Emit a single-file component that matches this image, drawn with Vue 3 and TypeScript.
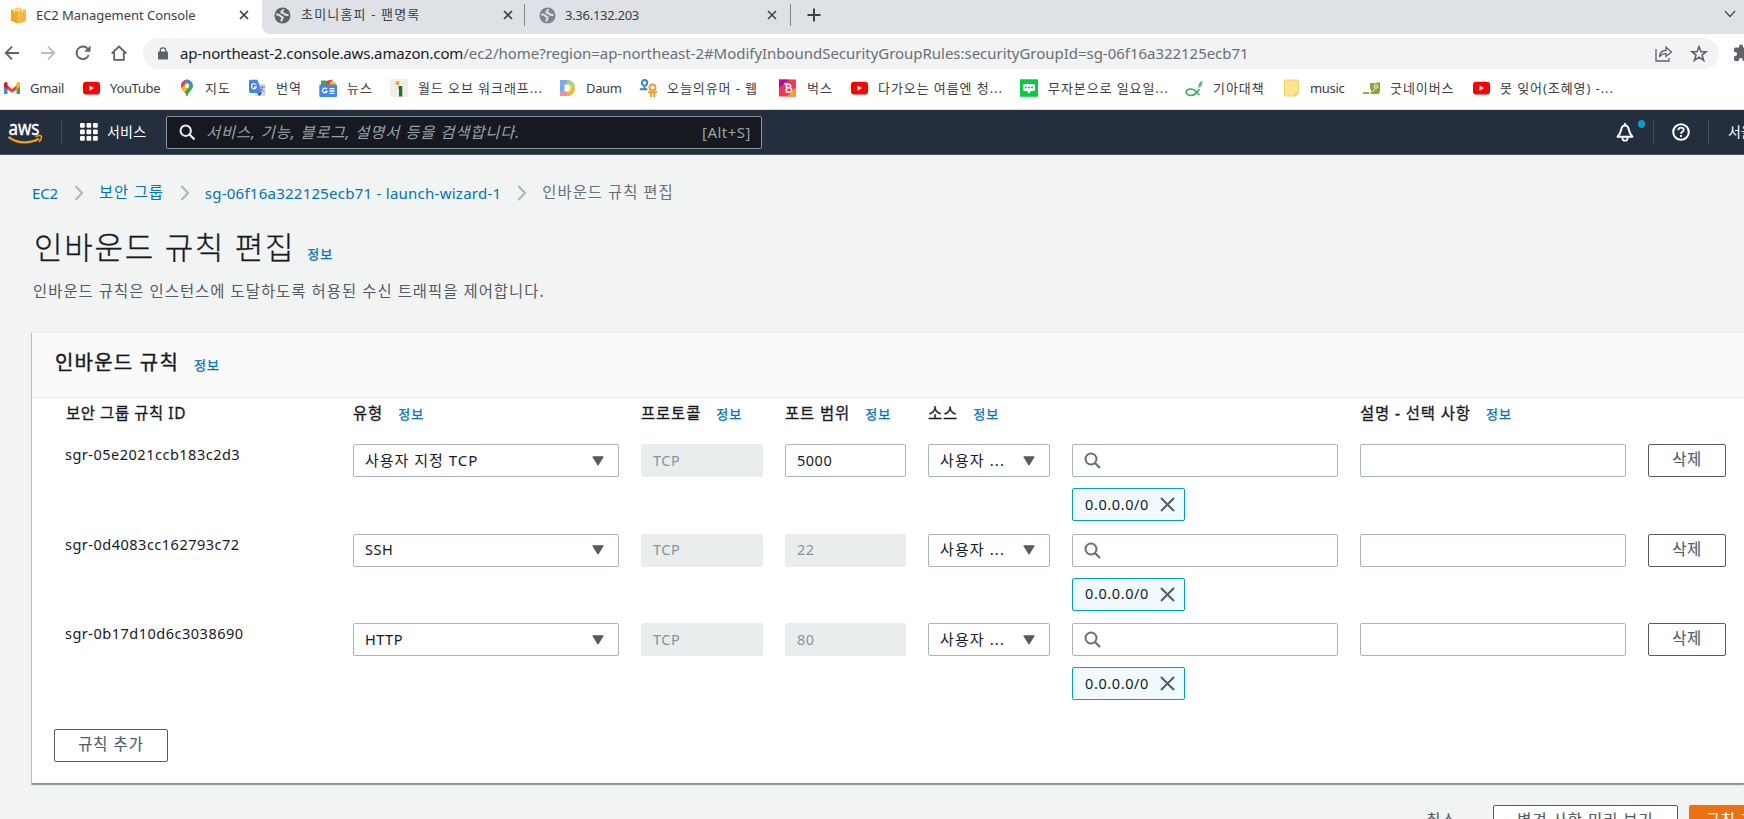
<script setup lang="ts">
interface Bookmark { label: string; icon: string; latin?: boolean }
interface Rule { id: string; type: string; port: string; editable: boolean; source: string }

const bookmarks: Bookmark[] = [
  { label: 'Gmail', icon: 'gmail', latin: true },
  { label: 'YouTube', icon: 'youtube', latin: true },
  { label: '지도', icon: 'maps' },
  { label: '번역', icon: 'translate' },
  { label: '뉴스', icon: 'news' },
  { label: '월드 오브 워크래프...', icon: 'inven' },
  { label: 'Daum', icon: 'daum', latin: true },
  { label: '오늘의유머 - 웹', icon: 'humor' },
  { label: '벅스', icon: 'bugs' },
  { label: '다가오는 여름엔 청...', icon: 'youtube' },
  { label: '무자본으로 일요일...', icon: 'blog' },
  { label: '기아대책', icon: 'fish' },
  { label: 'music', icon: 'folder', latin: true },
  { label: '굿네이버스', icon: 'good' },
  { label: '못 잊어(조혜영) -...', icon: 'youtube' },
]

const rules: Rule[] = [
  { id: 'sgr-05e2021ccb183c2d3', type: '사용자 지정 TCP', port: '5000', editable: true, source: '0.0.0.0/0' },
  { id: 'sgr-0d4083cc162793c72', type: 'SSH', port: '22', editable: false, source: '0.0.0.0/0' },
  { id: 'sgr-0b17d10d6c3038690', type: 'HTTP', port: '80', editable: false, source: '0.0.0.0/0' },
]

const columns = [
  { label: '보안 그룹 규칙 ID', info: false },
  { label: '유형', info: true },
  { label: '프로토콜', info: true },
  { label: '포트 범위', info: true },
  { label: '소스', info: true },
  { label: '', info: false },
  { label: '설명 - 선택 사항', info: true },
]
const gridDots = [0, 1, 2, 3, 4, 5, 6, 7, 8]
</script>

<template>
  <div class="window">
    <div class="tabs">
      <div class="tab active">
        <svg class="fav" width="17" height="17" viewBox="0 0 17 17">
          <path d="M1 3l7.500-2.500 7.500 2.500v11l-7.500 2.500-7.500-2.500z" fill="#f4a81d" />
          <path d="M1 3l7.500-2.500 7.500 2.500-7.500 2z" fill="#fcd36c" />
          <path d="M8.500 5l7.500-2v11l-7.500 2.500z" fill="#f9b934" />
          <path d="M4.500 2v3.500M12.500 2v3.500" stroke="#fff1cc" stroke-width=".8" />
          <path d="M8.500 5v11.500" stroke="#fcd98a" stroke-width=".6" />
        </svg>
        <span class="tab-title ec2">EC2 Management Console</span>
        <svg class="close" width="10" height="10" viewBox="0 0 10 10"><path d="M1 1l8 8M9 1l-8 8" stroke="#3c4043" stroke-width="1.700" /></svg>
      </div>
      <div class="tab second">
        <svg class="fav" width="17" height="17" viewBox="0 0 17 17"><circle cx="8.500" cy="8.500" r="8" fill="#5f6368" /><path d="M2.200 7.500c2-.2 3.400.2 4.100 1.300.8 1.100 2.400.6 2.400 1.900 0 1.200-1.500 1.300-1.300 3.800M9.500 2.400c-.3 1.700-2.300 1.200-2.200 2.700.1 1.200 2.300.6 2.900 1.700.5 1 2 1.400 4.300 1.300" fill="none" stroke="#dee1e6" stroke-width="2" /></svg>
        <span class="tab-title hangul">초미니홈피 - 팬명록</span>
        <svg class="close" width="10" height="10" viewBox="0 0 10 10"><path d="M1 1l8 8M9 1l-8 8" stroke="#3c4043" stroke-width="1.700" /></svg>
      </div>
      <div class="tab third">
        <svg class="fav" width="17" height="17" viewBox="0 0 17 17"><circle cx="8.500" cy="8.500" r="8" fill="#80848a" /><path d="M2.200 7.500c2-.2 3.400.2 4.100 1.300.8 1.100 2.400.6 2.400 1.900 0 1.200-1.500 1.300-1.300 3.800M9.500 2.400c-.3 1.700-2.300 1.200-2.200 2.700.1 1.200 2.300.6 2.900 1.700.5 1 2 1.400 4.300 1.300" fill="none" stroke="#dee1e6" stroke-width="2" /></svg>
        <span class="tab-title ip">3.36.132.203</span>
        <svg class="close" width="10" height="10" viewBox="0 0 10 10"><path d="M1 1l8 8M9 1l-8 8" stroke="#3c4043" stroke-width="1.500" /></svg>
      </div>
      <svg class="plus" width="14" height="14" viewBox="0 0 14 14"><path d="M7 .5v13M.5 7h13" stroke="#3c4043" stroke-width="2" /></svg>
      <svg class="chevron" width="12" height="8" viewBox="0 0 12 8"><path d="M.8 .8l5.200 5.700 5.200-5.700" fill="none" stroke="#3c4043" stroke-width="1.200" /></svg>
    </div>

    <div class="toolbar">
      <svg class="nav" width="18" height="18" viewBox="0 0 18 18"><path d="M16 9H3M9 2.700L2.700 9 9 15.300" fill="none" stroke="#5f6368" stroke-width="1.800" /></svg>
      <svg class="nav" width="18" height="18" viewBox="0 0 18 18"><path d="M2 9h13M9 2.700L15.300 9 9 15.300" fill="none" stroke="#babcbe" stroke-width="1.800" /></svg>
      <svg class="nav" width="18" height="18" viewBox="0 0 18 18"><path d="M14.700 11.200A6.300 6.300 0 1 1 13.600 4.600" fill="none" stroke="#5f6368" stroke-width="1.900" /><path d="M16.500 1.500v6.300h-6.300z" fill="#5f6368" /></svg>
      <svg class="nav" width="18" height="18" viewBox="0 0 18 18"><path d="M1.700 9.500L9 2.500l7.300 7M4.200 8v7.800h9.600V8" fill="none" stroke="#5f6368" stroke-width="1.800" /></svg>
      <div class="address">
        <svg class="lock" width="10" height="13" viewBox="0 0 10 13"><rect y="4.500" width="10" height="8" rx="1" fill="#5f6368" /><path d="M2.300 5V3.200a2.700 2.400 0 0 1 5.400 0V5" fill="none" stroke="#5f6368" stroke-width="1.300" /></svg>
        <span class="host">ap-northeast-2.console.aws.amazon.com</span><span class="path">/ec2/home?region=ap-northeast-2#ModifyInboundSecurityGroupRules:securityGroupId=sg-06f16a322125ecb71</span>
        <svg class="share" width="18" height="17" viewBox="0 0 18 17"><path d="M1 4v12h13v-3M4.500 12c.3-4.500 3-6.500 6.500-6.500V2.200L16.500 7 11 11.500V8.700c-3 0-5 .8-6.500 3.300z" fill="none" stroke="#5f6368" stroke-width="1.300" /></svg>
        <svg class="star" width="18" height="17" viewBox="0 0 18 17"><path d="M9 1.700l2 5h5.200l-4.200 3.400 1.600 5.300L9 12.200l-4.600 3.200L6 10.100 1.800 6.700H7z" fill="none" stroke="#5f6368" stroke-width="1.600" /></svg>
      </div>
      <svg class="puzzle" width="18" height="18" viewBox="0 0 18 18"><path d="M16 8.500h-1V5a1.500 1.500 0 0 0-1.500-1.500H10v-1a2 2 0 0 0-4 0v1H2.500A1.500 1.500 0 0 0 1 5v3h1a2 2 0 0 1 0 4.200H1v3.300A1.500 1.500 0 0 0 2.500 17h3.300v-1a2 2 0 0 1 4 0v1h3.700a1.500 1.500 0 0 0 1.500-1.500v-3h1z" fill="#5f6368" /></svg>
    </div>

    <div class="bookmarks">
      <div v-for="(b, i) in bookmarks" :key="i" class="bookmark" :class="{ latin: b.latin }">
        <svg width="18" height="18" viewBox="0 0 18 18">
          <g v-if="b.icon === 'gmail'">
            <path d="M2 3.500v11.500h3.500V8z" fill="#4285f4" /><path d="M18 3.500v11.500h-3.500V8z" fill="#34a853" />
            <path d="M2 3.500L10 10l8-6.500v4.300l-8 6-8-6z" fill="#ea4335" /><path d="M2 5a2 2 0 0 1 3.500-1.200V10.500L2 7.800z" fill="#c5221f" /><path d="M18 5a2 2 0 0 0-3.500-1.200V10.500L18 7.800z" fill="#fbbc04" />
          </g>
          <g v-else-if="b.icon === 'youtube'"><rect x="1" y="2.800" width="17" height="12.600" rx="3" fill="#f00" /><path d="M7.500 6.500l4.500 2.600-4.500 2.600z" fill="#fff" /></g>
          <g v-else-if="b.icon === 'maps'">
            <path d="M4 6.800a6 6 0 0 1 12 0c0 4-4.500 5.500-5.500 10.500h-1C9 12.500 4 10.800 4 6.800z" fill="#34a853" />
            <path d="M5.200 3.200A6 6 0 0 1 12.500 1.300L5.300 10C4 8 3.500 5.500 5.200 3.200z" fill="#ea4335" /><path d="M7.500 1.300a6 6 0 0 1 7.200 2L10 9z" fill="#4285f4" /><path d="M4.500 9.200l4.300-5 2.700 4.500-4 5z" fill="#fbbc04" /><circle cx="10" cy="6.700" r="2.200" fill="#fff" />
          </g>
          <g v-else-if="b.icon === 'translate'"><rect x="7" y="5" width="10.500" height="12" rx="1" fill="#d7dadd" /><path d="M2.500 .8h7L14 14H2.500A1.500 1.500 0 0 1 1 12.500v-10A1.500 1.500 0 0 1 2.500 .8z" fill="#4a83e8" /><path d="M9.500 14H14l-2.800 3.200z" fill="#2457bd" /><path d="M8.200 6A2.500 2.500 0 1 0 8.300 8.200H6" fill="none" stroke="#fff" stroke-width="1.200" /><path d="M12 8h5M14.500 7v1c0 2-1 3.500-2 4.200M13 9.500l3.500 3.500" fill="none" stroke="#68788f" stroke-width=".9" /></g>
          <g v-else-if="b.icon === 'news'"><path d="M3 3l10-2.500 1.500 6H4z" fill="#ea4335" /><path d="M2 1.500h5v5H2z" fill="#34a853" /><path d="M11 2.500l6 1-.8 4H11z" fill="#fbbc04" /><rect x=".3" y="5.500" width="17.700" height="12.500" rx="1.200" fill="#4285f4" /><path d="M8 10.200A2.400 2.400 0 1 0 8.200 12.300H6M10.500 9.700h5M10.500 12h5M10.500 14.300h5" fill="none" stroke="#fff" stroke-width="1.300" /></g>
          <g v-else-if="b.icon === 'inven'"><rect width="18" height="18" rx="1" fill="#eee" /><circle cx="7.500" cy="4" r="2" fill="#ff9d14" /><path d="M8.500 7h3.800v10.500H9V10h-.5z" fill="#26751c" /></g>
          <g v-else-if="b.icon === 'daum'"><path d="M2 1h7a8 8 0 0 1 0 16H2z" fill="#79a8f7" /><path d="M9 1a8 8 0 0 1 8 8H9z" fill="#b6d56a" /><path d="M17 9a8 8 0 0 1-8 8V9z" fill="#f8bd24" /><path d="M2 13l7-1.500V17H2z" fill="#f28cae" /><path d="M6.500 5.500H9a3.500 3.500 0 0 1 0 7H6.500z" fill="#fff" /></g>
          <g v-else-if="b.icon === 'humor'"><circle cx="5.500" cy="3.800" r="2.800" fill="none" stroke="#3287c7" stroke-width="1.900" /><path d="M5.500 7v3M.8 10.300h7.500" stroke="#3287c7" stroke-width="1.900" /><circle cx="13.500" cy="8.500" r="3" fill="none" stroke="#f49a31" stroke-width="1.900" /><path d="M9 13.300h9M12 13.300V18M15.200 13.300V18" stroke="#f49a31" stroke-width="1.900" /></g>
          <g v-else-if="b.icon === 'bugs'"><path d="M0 .5h17v17H0z" fill="#f43751" /><path d="M0 .5h10L0 9z" fill="#c400a8" /><path d="M17 8v9.500H8z" fill="#ff9b24" /><path d="M5 4.500l2.500.5v8.500M7.500 5.200h2.300a1.700 1.700 0 0 1 0 3.500M8 8.700h2.400a2.200 2.200 0 0 1 0 4.500H7.500" fill="none" stroke="#fff" stroke-width="1.600" /></g>
          <g v-else-if="b.icon === 'blog'"><rect y=".3" width="18" height="17.500" fill="#06cc42" /><path d="M4.500 5h9A1.500 1.500 0 0 1 15 6.500v4a1.500 1.500 0 0 1-1.500 1.500H11l-2 2.500L7 12H4.500A1.500 1.500 0 0 1 3 10.500v-4A1.500 1.500 0 0 1 4.500 5z" fill="#fff" /><path d="M5 8.500h8" stroke="#06cc42" stroke-width="1.400" stroke-dasharray="2 1" /></g>
          <g v-else-if="b.icon === 'fish'"><path d="M14.500 16c-2.500-1.500-4.500-6-8.500-6-3 0-4.800 1.600-4.800 3.200S3 16.500 6 16.500c4 0 6.500-3.500 8.500-6.300" fill="none" stroke="#2eac55" stroke-width="1.600" /><path d="M13.500 9c-.5-3.500.7-6 3.800-7.300.5 3.100-.5 5.900-3.800 7.300z" fill="#55bd65" /></g>
          <g v-else-if="b.icon === 'folder'"><path d="M3.500 1h12a1 1 0 0 1 1 1v11.500l-2.500 3.500H3.500a1 1 0 0 1-1-1V2a1 1 0 0 1 1-1z" fill="#ffe48d" stroke="#edcd5a" stroke-width=".8" /><path d="M14 17a1.600 1.600 0 1 1 2.500-2.300" fill="#ffe48d" stroke="#dfb83c" stroke-width=".9" /></g>
          <g v-else><path d="M1 13h6v2H1z" fill="#94ac4a" /><path d="M8 4h4l1 .5 1.500-1H18V12l-1 3H8l1.500-3L8 9z" fill="#8ea63c" /><circle cx="14" cy="7.500" r="1.700" fill="none" stroke="#fff" stroke-width="1" /><path d="M10.500 12.500l3-3" stroke="#fff" stroke-width="1" /></g>
        </svg>
        <span>{{ b.label }}</span>
      </div>
    </div>

    <header class="aws-bar">
      <svg class="aws" width="36" height="26" viewBox="0 0 36 26">
        <text x=".5" y="14.500" font-family="Noto Sans, sans-serif" font-size="19" fill="#fff" stroke="#fff" stroke-width=".4" textLength="31" lengthAdjust="spacingAndGlyphs">aws</text>
        <path d="M.5 17c9 6.800 21 7 30.500 1.800" fill="none" stroke="#f79a1c" stroke-width="2.300" />
        <path d="M27.500 16.700c3-1.300 5.300-1.200 5.800-.4.500.9-.5 3.500-2.300 5.700" fill="none" stroke="#f79a1c" stroke-width="1.600" />
      </svg>
      <i class="rule first"></i>
      <svg class="apps" width="18" height="18" viewBox="0 0 18 18"><rect v-for="d in gridDots" :key="d" :x="(d % 3) * 6.500" :y="Math.floor(d / 3) * 6.500" width="4.800" height="4.800" rx="1" fill="#fff" /></svg>
      <span class="services">서비스</span>
      <div class="global-search">
        <svg width="17" height="17" viewBox="0 0 17 17"><circle cx="6.700" cy="6.700" r="5.200" fill="none" stroke="#eaeded" stroke-width="2" /><path d="M10.500 10.500l5 5" stroke="#eaeded" stroke-width="2.300" /></svg>
        <span class="placeholder">서비스, 기능, 블로그, 설명서 등을 검색합니다.</span>
        <span class="shortcut">[Alt+S]</span>
      </div>
      <div class="bell">
        <svg width="18" height="20" viewBox="0 0 18 20"><path d="M1.500 14.700C4 12.500 4.600 10.500 5.200 7.500 5.700 5 7 3.500 9 3.500s3.300 1.500 3.800 4c.6 3 1.200 5 3.700 7.200z" fill="none" stroke="#fff" stroke-width="2" stroke-linejoin="round" /><path d="M9 1v3M6.500 15v1.500a2.500 2.200 0 0 0 5 0V15" fill="none" stroke="#fff" stroke-width="1.800" /></svg>
        <i class="dot"></i>
      </div>
      <i class="rule"></i>
      <svg class="help" width="18" height="18" viewBox="0 0 18 18"><circle cx="9" cy="9" r="7.800" fill="none" stroke="#fff" stroke-width="2" /><path d="M6.300 7.300c0-1.700 1.200-2.700 2.700-2.700s2.700 1 2.700 2.300c0 1.900-2.700 1.900-2.700 3.800M9 12v2" fill="none" stroke="#fff" stroke-width="1.800" /></svg>
      <i class="rule"></i>
      <span class="region">서울</span>
    </header>

    <main class="page">
      <nav class="crumbs">
        <a class="en">EC2</a>
        <svg width="10" height="16" viewBox="0 0 10 16"><path d="M1.500 1l6.500 7-6.500 7" fill="none" stroke="#aab7b8" stroke-width="2" /></svg>
        <a>보안 그룹</a>
        <svg width="10" height="16" viewBox="0 0 10 16"><path d="M1.500 1l6.500 7-6.500 7" fill="none" stroke="#aab7b8" stroke-width="2" /></svg>
        <a class="group">sg-06f16a322125ecb71 - launch-wizard-1</a>
        <svg width="10" height="16" viewBox="0 0 10 16"><path d="M1.500 1l6.500 7-6.500 7" fill="none" stroke="#aab7b8" stroke-width="2" /></svg>
        <span>인바운드 규칙 편집</span>
      </nav>
      <div class="heading"><h1>인바운드 규칙 편집</h1><a class="info">정보</a></div>
      <p class="desc">인바운드 규칙은 인스턴스에 도달하도록 허용된 수신 트래픽을 제어합니다.</p>

      <section class="panel">
        <div class="panel-head"><h2>인바운드 규칙</h2><a class="info">정보</a></div>
        <div class="grid labels">
          <div v-for="(c, i) in columns" :key="i" class="label"><span>{{ c.label }}</span><a v-if="c.info" class="info">정보</a></div>
        </div>
        <div v-for="r in rules" :key="r.id" class="grid rule-row">
          <span class="rule-id">{{ r.id }}</span>
          <div class="field select"><span :class="{ ko: r.editable }">{{ r.type }}</span><svg width="12" height="10" viewBox="0 0 12 10"><path d="M.8 .8h10.400L6 9.200z" fill="#545b64" stroke="#545b64" stroke-linejoin="round" /></svg></div>
          <div class="field disabled"><span>TCP</span></div>
          <div class="field" :class="{ disabled: !r.editable }"><span>{{ r.port }}</span></div>
          <div class="field select small"><span class="ko">사용자 ...</span><svg width="12" height="10" viewBox="0 0 12 10"><path d="M.8 .8h10.400L6 9.200z" fill="#545b64" stroke="#545b64" stroke-linejoin="round" /></svg></div>
          <div class="source">
            <div class="field"><svg width="17" height="17" viewBox="0 0 17 17"><circle cx="7" cy="7" r="5.500" fill="none" stroke="#687078" stroke-width="2" /><path d="M11 11l5 5" stroke="#687078" stroke-width="2.200" /></svg></div>
            <div class="token"><span>{{ r.source }}</span><svg width="15" height="15" viewBox="0 0 15 15"><path d="M1 1l13 13M14 1L1 14" stroke="#545b64" stroke-width="2" /></svg></div>
          </div>
          <div class="field"></div>
          <button class="btn delete">삭제</button>
        </div>
        <button class="btn add">규칙 추가</button>
      </section>

      <footer class="actions">
        <button class="btn link">취소</button>
        <button class="btn preview">변경 사항 미리 보기</button>
        <button class="btn primary">규칙 저장</button>
      </footer>
    </main>
  </div>
</template>

<style>
html, body { margin: 0; overflow: hidden; }
</style>

<style scoped>
* { box-sizing: border-box; }
.window { width: 1744px; height: 819px; overflow: hidden; background: #f2f3f3; color: #16191f; font-family: "Noto Sans", "Noto Sans CJK KR", sans-serif; font-size: 15px; white-space: nowrap; }
svg { display: block; flex: none; }
h1, h2, p { margin: 0; font-weight: 400; }

.tabs { display: flex; align-items: center; height: 34px; padding-bottom: 4px; background: #dee1e6; }
.tab { display: flex; align-items: center; height: 34px; margin-bottom: -4px; padding-bottom: 4px; font-size: 13px; color: #3c4043; }
.tab.active { width: 262px; padding-left: 10px; background: #fff; }
.tab.second { width: 263px; padding-left: 12px; }
.tab.third { width: 266px; padding-left: 14px; }
.tab.second, .tab.third { position: relative; }
.tab.second::after, .tab.third::after { content: ""; position: absolute; right: 0; top: 4px; width: 1px; height: 22px; background: #85888c; }
.tab.second::before { content: ""; position: absolute; left: 0; bottom: 0; width: 8px; height: 8px; background: radial-gradient(circle at 100% 0, #dee1e6 7.500px, #fff 8px); }
.tab-title { margin-left: 9px; line-height: 20px; margin-top: -1px; }
.tab-title.ec2 { letter-spacing: -.04px; }
.tab-title.hangul { letter-spacing: 1.17px; margin-left: 10px; margin-top: -2px; }
.tab-title.ip { letter-spacing: -.28px; }
.close { margin-left: auto; margin-right: 13px; }
.second .close { margin-right: 12px; }
.third .close { margin-right: 14px; }
.plus { margin-left: 16px; }
.chevron { margin-left: auto; margin-right: 8px; margin-top: -3px; }

.toolbar { display: flex; align-items: center; height: 38px; padding-left: 3px; background: #fff; }
.nav { margin-right: 17.500px; }
.address { display: flex; align-items: center; width: 1576px; flex: none; height: 31px; margin-left: -2px; padding: 0 11px 0 15px; border-radius: 16px; background: #f1f3f4; }
.lock { margin-right: 12px; }
.host { color: #202124; letter-spacing: -.15px; }
.path { color: #6b6f73; letter-spacing: -.03px; }
.share { margin-left: auto; margin-right: 17px; }
.puzzle { margin-left: 14px; }

.bookmarks { display: grid; grid-template-columns: 80px 95px 71px 71px 71px 168px 81px 140px 71px 170px 165px 97px 80px 110px 150px; align-items: center; height: 38px; padding: 0 0 5px 2px; border-bottom: 1px solid #dadce0; background: #fff; }
.bookmark { display: flex; align-items: center; gap: 10px; font-size: 13px; line-height: 20px; letter-spacing: .92px; color: #3c4043; }
.bookmark.latin { letter-spacing: -.33px; }

.aws-bar { display: flex; align-items: center; height: 45px; padding-left: 8px; border-bottom: 1px solid #4b5561; background: #232f3e; color: #fff; }
.aws { margin-top: 2px; overflow: visible; }
.rule { width: 1px; height: 24px; background: #414d5c; }
.rule.first { margin-left: 17px; }
.apps { margin-left: 18px; }
.services { margin-left: 9px; width: 50px; font-size: 14px; letter-spacing: .2px; margin-top: -3px; }
.global-search { display: flex; align-items: center; width: 596px; height: 33px; margin-left: 9px; padding: 0 10px 0 12px; border: 1px solid #879596; border-radius: 2px; background: #16191f; color: #95a5a6; }
.placeholder { margin-left: 10px; font-size: 15.4px; font-style: italic; letter-spacing: .87px; margin-top: -1px; }
.shortcut { margin-left: auto; letter-spacing: .49px; }
.bell { position: relative; margin-left: auto; margin-right: 19px; }
.dot { position: absolute; left: 22px; top: -2px; width: 7px; height: 8px; border-radius: 50%; background: #00a1c9; }
.help { margin: 0 18px; }
.region { width: 16px; margin-left: 19px; font-size: 14px; margin-top: -3px; }

.crumbs { display: flex; align-items: center; height: 20px; margin: 28px 0 0 32px; font-size: 15.4px; line-height: 20px; color: #687078; letter-spacing: 1px; }
.crumbs a { color: #0073bb; letter-spacing: .8px; }
.crumbs .en { font-size: 15px; letter-spacing: -.1px; }
.crumbs .group { font-size: 15px; letter-spacing: .25px; }
.crumbs svg { margin: 0 15px 0 16px; }
.heading { display: flex; align-items: baseline; height: 40px; margin: 24px 0 0 34px; line-height: 40px; }
h1 { font-size: 31px; font-weight: 300; letter-spacing: 1.7px; color: #16191f; -webkit-text-stroke: .3px #16191f; }
.info { font-size: 13px; color: #0073bb; letter-spacing: 1.1px; -webkit-text-stroke: .3px #0073bb; }
.heading .info { margin-left: 12px; }
.desc { margin: 15px 0 0 33px; font-size: 15.4px; line-height: 20px; letter-spacing: 1.04px; color: #545b64; }

.panel { height: 452px; margin: 30px 0 0 32px; border-top: 1px solid #eaeded; border-bottom: 1px solid #879596; background: #fff; box-shadow: 0 1px 1px rgba(0, 28, 36, .25), -1px 1px 1px rgba(0, 28, 36, .2); }
.panel-head { display: flex; align-items: baseline; height: 65px; padding: 15px 0 0 23px; border-bottom: 1px solid #eaeded; background: #fafafa; line-height: 30px; }
h2 { font-size: 20px; letter-spacing: 1.2px; -webkit-text-stroke: .4px #16191f; }
.panel-head .info { margin-left: 15px; }
.grid { display: grid; grid-template-columns: 265px 266px 122px 121px 122px 266px 266px 78px; column-gap: 22px; align-items: start; padding-left: 34px; }
.labels { height: 46px; padding-top: 5px; }
.label { display: flex; align-items: baseline; font-size: 15.4px; line-height: 21px; letter-spacing: .9px; -webkit-text-stroke: .3px #16191f; }
.label:first-child { letter-spacing: .6px; }
.label .info { margin-left: 15px; -webkit-text-stroke: .3px #0073bb; }
.rule-row { height: 89.500px; }
.rule-id { margin-left: -1px; font-size: 14.500px; line-height: 20px; letter-spacing: .5px; }
.field { display: flex; align-items: center; height: 33px; padding: 0 11px; border: 1px solid #aab7b8; border-radius: 2px; background: #fff; font-size: 14.500px; letter-spacing: .5px; }
.field span, .token span { margin-top: -2px; }
.field.disabled { border-color: #eaeded; background: #eaeded; color: #879596; }
.select { justify-content: space-between; padding-right: 14px; }
.field .ko { font-size: 15px; letter-spacing: 1px; margin-top: -3px; }
.small .ko { letter-spacing: 1.1px; }
.token { display: flex; align-items: center; justify-content: space-between; width: 113px; height: 33px; margin-top: 11px; padding: 0 9px 0 12px; border: 1px solid #00a1c9; border-radius: 2px; background: #f1faff; font-size: 14.500px; letter-spacing: .61px; }
.btn { height: 33px; padding: 0 0 4px; border: 1px solid #545b64; border-radius: 2px; background: #fff; color: #545b64; font-family: inherit; font-size: 15.4px; letter-spacing: 1px; -webkit-text-stroke: .15px currentColor; }
.delete { width: 78px; letter-spacing: .6px; }
.add { display: block; width: 114px; margin: 16.500px 0 0 22px; }
.actions { display: flex; justify-content: flex-end; margin: 21px -44px 0 0; }
.btn.link { width: 65px; margin-right: 19px; border-color: transparent; background: none; }
.btn.preview { width: 185px; }
.btn.primary { width: 99px; margin-left: 11px; border-color: #ec7211; background: #ec7211; color: #fff; }
</style>
